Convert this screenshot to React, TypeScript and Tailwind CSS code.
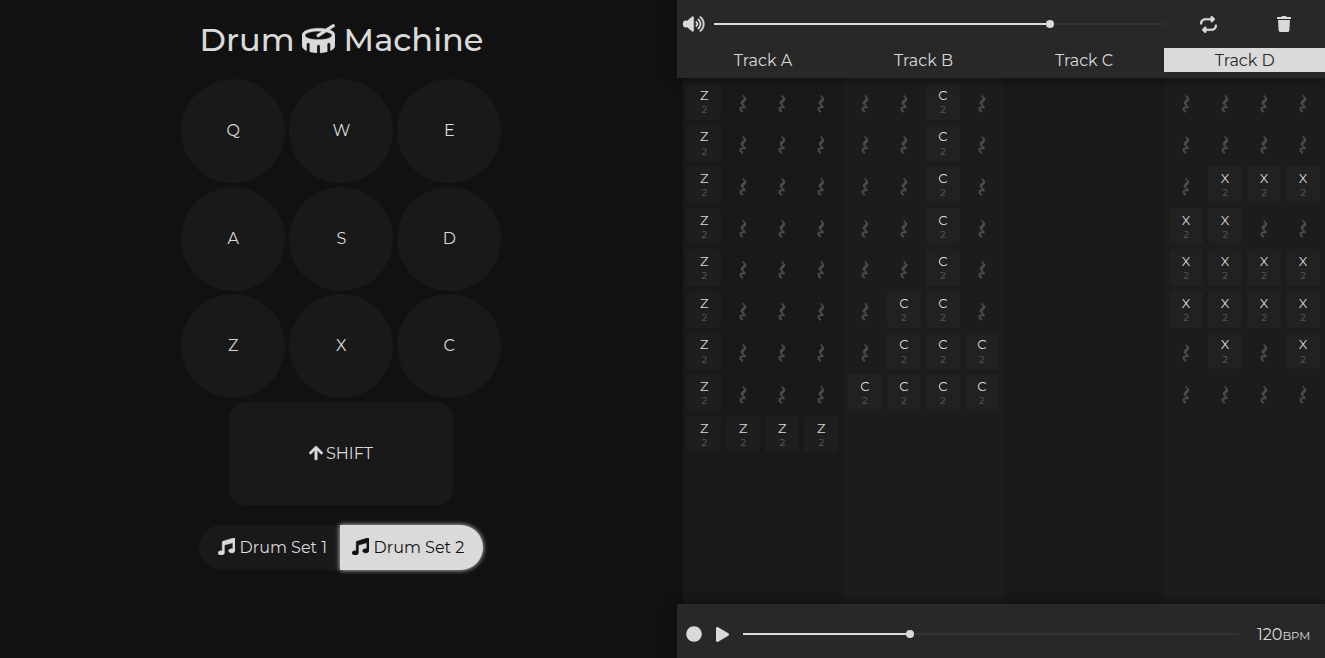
import type { ReactNode } from "react";
import { FaArrowUp, FaCircle, FaDrum, FaMusic, FaPlay, FaTrash } from "react-icons/fa";
import { FaRepeat, FaVolumeHigh } from "react-icons/fa6";

const PADS = ["Q", "W", "E", "A", "S", "D", "Z", "X", "C"];

const TRACKS = [
  { name: "Track A", rows: ["Z...", "Z...", "Z...", "Z...", "Z...", "Z...", "Z...", "Z...", "ZZZZ"] },
  { name: "Track B", rows: ["..C.", "..C.", "..C.", "..C.", "..C.", ".CC.", ".CCC", "CCCC"] },
  { name: "Track C", rows: [] as string[] },
  { name: "Track D", rows: ["....", "....", ".XXX", "XX..", "XXXX", "XXXX", ".X.X", "...."] },
];

function Rest() {
  return (
    <svg viewBox="0 0 8 18" className="mt-[5px] ml-[0.8px] h-[18px] w-2" fill="none" stroke="#4b4b4b" strokeLinecap="round" strokeLinejoin="round">
      <path d="M4.2 .9 L6.2 3.6" strokeWidth="1.6" />
      <path d="M6 4 C5.6 6 3.6 6.2 2.9 8" strokeWidth="2.8" />
      <path d="M2.8 8.2 L5.9 12.2" strokeWidth="1.7" />
      <path d="M5.6 12.3 C3.4 12 1.3 12.4 1.4 14.2 C1.6 15.4 2.4 15.8 3.2 16.6" strokeWidth="2" />
    </svg>
  );
}

function Cell({ note }: { note: string }) {
  if (note === ".") {
    return (
      <div className="flex h-[36.6px] items-center justify-center">
        <Rest />
      </div>
    );
  }
  return (
    <div className="flex h-[36.6px] flex-col items-center rounded-[3px] bg-white/[0.025] pt-[3.8px] pl-[0.6px]">
      <span className="text-[13px] leading-[16px]">{note}</span>
      <span className="mt-[1.2px] text-[10px] leading-[12px] font-medium text-[#505050]">2</span>
    </div>
  );
}

function Slider({ value, className }: { value: number; className: string }) {
  return (
    <div className={`flex h-2 items-center ${className}`}>
      <div className="h-0.5 bg-[#dadada]" style={{ width: `calc(${value}% - 4px)` }} />
      <div className="size-2 shrink-0 rounded-full bg-[#dadada]" />
      <div className="h-0.5 flex-1 bg-[#333]" />
    </div>
  );
}

function Label({ children, className = "" }: { children: ReactNode; className?: string }) {
  return <span className={`whitespace-pre ${className}`}>{children}</span>;
}

export default function App() {
  return (
    <div className="flex h-[658px] w-[1325px] overflow-hidden bg-[#111] font-['Montserrat','Inter',sans-serif] text-[16px] text-[#dadada]">
      <main className="flex w-[677px] flex-col items-center pl-[5px]">
        <h1 className="mt-[20px] flex h-10 items-center pl-[1px] text-[32px] leading-10 font-medium">
          <Label>Drum</Label>
          <FaDrum className="mr-[9px] mb-[3px] ml-[7px] size-[33px]" stroke="currentColor" strokeWidth="4" />
          <Label>Machine</Label>
        </h1>
        <div className="mt-[19px] grid grid-cols-3 gap-x-1 gap-y-[3.6px]">
          {PADS.map((k, i) => (
            <button
              key={k}
              className={`flex size-[104px] items-center justify-center rounded-full bg-[#191919] pl-[0.6px] ${i > 2 && i < 6 ? "pt-[1px]" : "pb-[0.4px]"}`}
            >
              {k}
            </button>
          ))}
        </div>
        <button className="mt-[4px] flex h-[103px] w-[224px] items-center justify-center gap-[3px] rounded-[16px] bg-[#191919]">
          <FaArrowUp className="mb-[2px] h-4 w-[14px]" stroke="currentColor" strokeWidth="14" />
          <Label>SHIFT</Label>
        </button>
        <div className="mt-[20px] mr-[1px] flex h-[45px]">
          <button className="flex w-[141px] items-center gap-[5px] rounded-l-full bg-[#191919] pl-[19px]">
            <FaMusic className="mb-[3px] size-[17px]" stroke="currentColor" strokeWidth="16" />
            <Label>Drum Set 1</Label>
          </button>
          <button className="flex w-[143px] items-center gap-[5px] rounded-r-full bg-[#dadada] pl-[12px] text-[#111] shadow-[0_0_5px_#dadada]">
            <FaMusic className="mb-[3px] size-[17px]" stroke="currentColor" strokeWidth="16" />
            <Label>Drum Set 2</Label>
          </button>
        </div>
      </main>
      <section className="flex w-[648px] flex-col">
        <header className="z-10 h-[78px] bg-[#282828] shadow-[0_0_10px_#0d0d0d]">
          <div className="flex h-12 items-center">
            <FaVolumeHigh className="mr-[0.5px] ml-[6px] h-[18px] w-[21.5px]" stroke="currentColor" strokeWidth="8" />
            <Slider value={74.6} className="ml-[9px] w-[450px]" />
            <FaRepeat className="ml-[36px] size-[17px]" stroke="currentColor" strokeWidth="6" />
            <FaTrash className="ml-[60px] h-4 w-[14px]" />
          </div>
          <nav className="ml-[5.7px] grid h-6 grid-cols-4 text-center leading-[25.5px]">
            {TRACKS.map((t, i) => (
              <button key={t.name} className={i === 3 ? "h-6 bg-[#dadada] text-[#282828]" : "h-6"}>
                {t.name}
              </button>
            ))}
          </nav>
        </header>
        <div className="ml-[5.7px] grid min-h-0 flex-1 grid-cols-4">
          {TRACKS.map((t) => (
            <div key={t.name} className="flex flex-col gap-[5px] bg-[#191919] px-[4.3px] pt-[5px] even:bg-[#1c1c1c]">
              {t.rows.map((r, i) => (
                <div key={i} className="grid grid-cols-[34px_34px_34px_34px] gap-x-[5px]">
                  {r.split("").map((n, j) => (
                    <Cell key={j} note={n} />
                  ))}
                </div>
              ))}
            </div>
          ))}
        </div>
        <footer className="z-10 flex h-[54px] items-center bg-[#282828] pt-[6px] shadow-[0_0_10px_#0d0d0d]">
          <FaCircle className="ml-[9px] size-4" />
          <FaPlay className="ml-[14px] h-[15px] w-[13px]" />
          <Slider value={33.6} className="ml-[14px] w-[496px]" />
          <Label className="ml-[18px] pt-[2px]">
            120<span className="text-[11.5px]">BPM</span>
          </Label>
        </footer>
      </section>
    </div>
  );
}
